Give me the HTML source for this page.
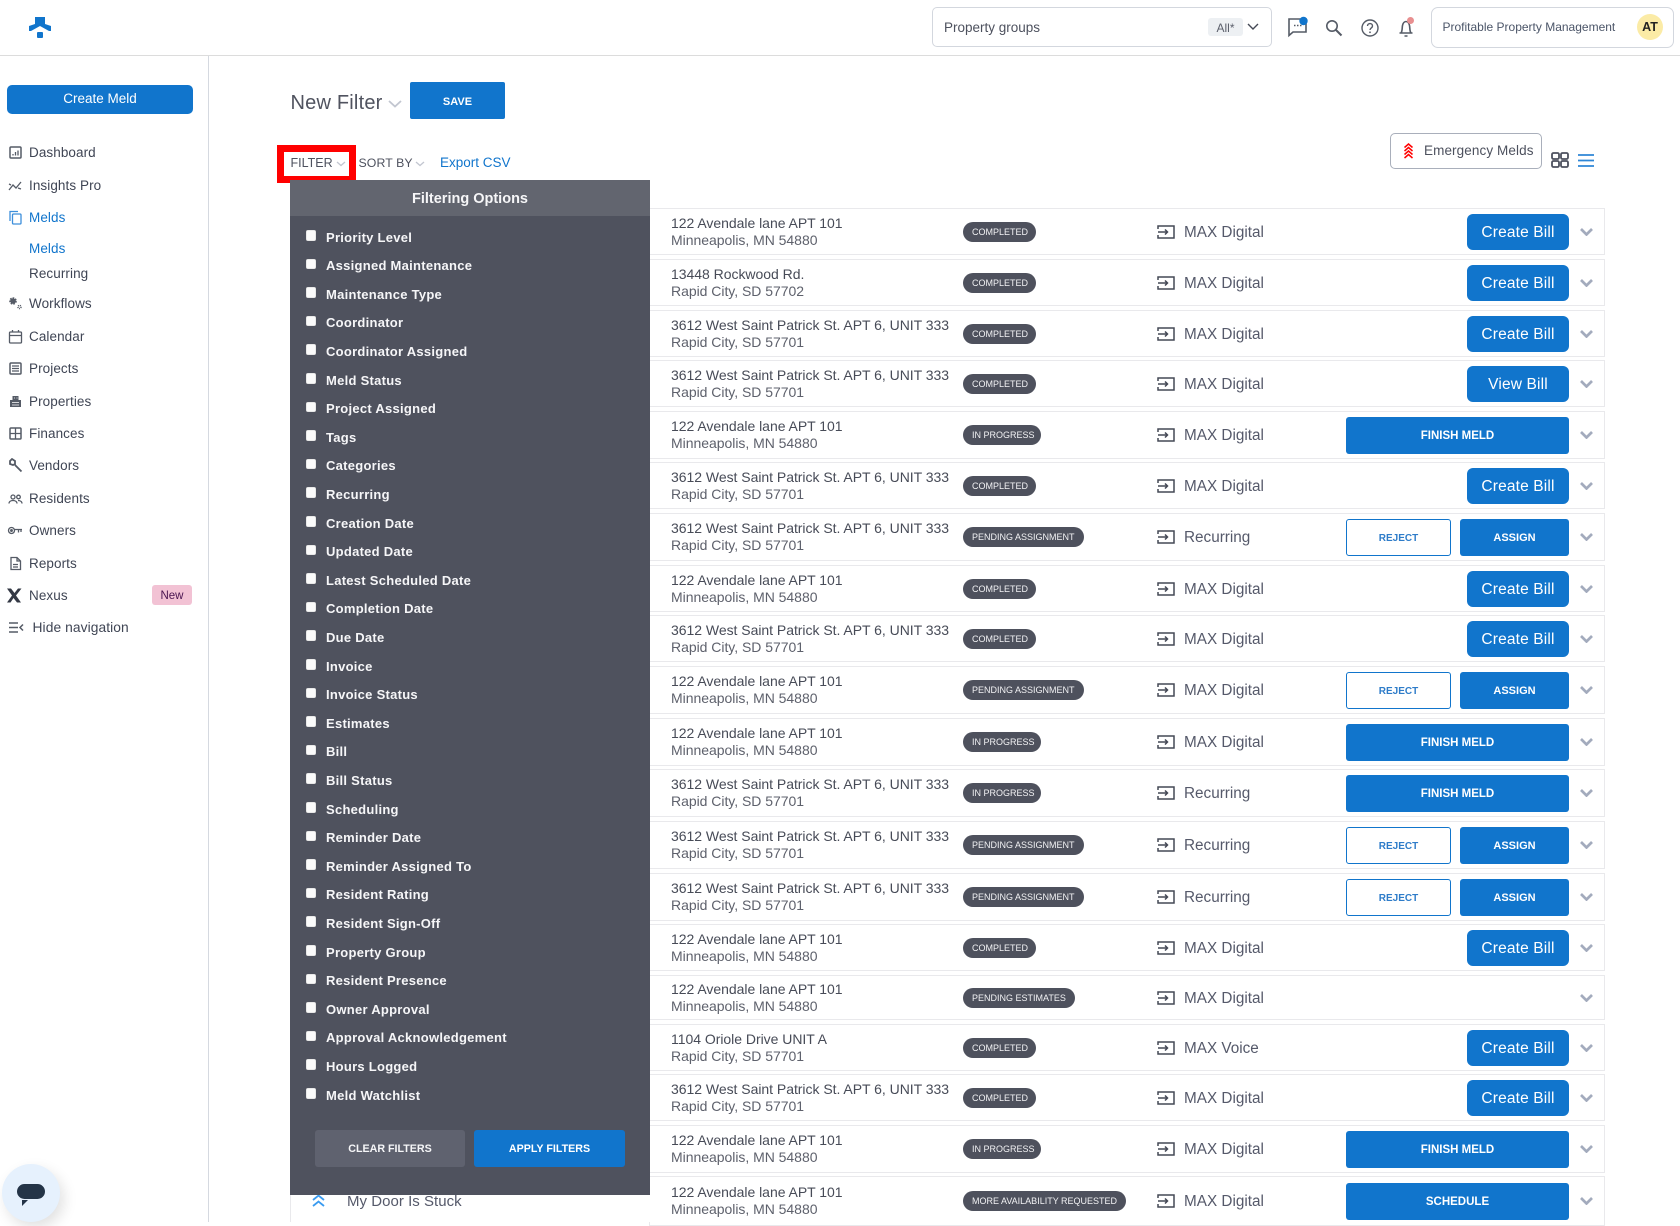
<!DOCTYPE html>
<html lang="en"><head><meta charset="utf-8"><title>Melds</title>
<style>
*{box-sizing:border-box}
html,body{margin:0;padding:0}
body{width:1680px;height:1222px;overflow:hidden;position:relative;background:#fff;font-family:"Liberation Sans",sans-serif;color:#4d515e}
.abs,.n,.ni,.f,.k,.r,.r>*{position:absolute}
.n{left:29px;font-size:13.5px;letter-spacing:.08px;line-height:18px;height:18px;color:#3f4554;white-space:nowrap}
.n.b{color:#1175cc}
.ni{left:8px;width:15px;height:15px;fill:none;stroke:#555b66;stroke-width:1.3}
.f{left:326px;margin-top:.6px;font-size:13px;letter-spacing:.27px;font-weight:bold;line-height:16px;color:#f6f6f8;white-space:nowrap}
.k{left:305.5px;margin-top:-1px;width:10.5px;height:10.5px;background:#fbfbfb;border-radius:2px;box-shadow:inset 0 0 1px #888}
.r{left:649px;width:956px;border:1px solid #e9e9ec;background:#fff}
.r>*{top:50%}
.a{left:21px;margin:-17px 0 0;font-size:14px;letter-spacing:-.03px;line-height:17px;color:#474b57;white-space:nowrap}
.a span{color:#5e616c}
.bd{left:313px;margin-top:-10px;height:20px;line-height:20px;border-radius:10px;background:#4e515d;color:#f2f2f4;font-size:9px;padding-left:9px;white-space:nowrap}
.w1{width:73px}.w2{width:78px}.w3{width:121px}.w4{width:112px}.w5{width:163px}
.sr{left:507px;margin-top:-7px;width:18px;height:14px}
.s{left:534px;margin-top:-9px;font-size:15.3px;line-height:20px;color:#55596a;white-space:nowrap}
.cb,.fm,.rj,.as{text-align:center;color:#fff;background:#1175cc}
.cb{left:817px;width:102px;height:36px;margin-top:-18px;line-height:38px;border-radius:6px;font-size:15.5px;letter-spacing:.15px}
.fm{left:696px;width:223px;height:37px;margin-top:-18px;line-height:39px;border-radius:3px;font-size:11.5px;font-weight:bold}
.rj{left:696px;width:105px;height:37px;margin-top:-18px;line-height:37px;border-radius:3px;font-size:10px;font-weight:bold;background:#fff;border:1px solid #1175cc;color:#2e7cc9}
.as{left:810px;width:109px;height:37px;margin-top:-18px;line-height:39px;border-radius:3px;font-size:11px;font-weight:bold}
.c{left:930px;margin-top:-4px;width:13px;height:8px}
</style></head><body>
<svg width="0" height="0" style="position:absolute"><defs>
<symbol id="src" viewBox="0 0 18 14"><path d="M1 4V1h16v12H1v-3M1 7h9.5M8 4.5L10.5 7 8 9.5" fill="none" stroke="#444855" stroke-width="1.5"/></symbol>
<symbol id="chv" viewBox="0 0 13 8"><path d="M1 1l5.5 5.5L12 1" fill="none" stroke="#a3abbd" stroke-width="2.7"/></symbol>
</defs></svg>

<!-- header -->
<div class="abs" style="left:0;top:54.5px;width:1680px;height:1.5px;background:#dcdcdc"></div>
<svg class="abs" style="left:28px;top:16px" width="24" height="23" viewBox="0 0 24 23"><path d="M7 1h10v7l6 2v5h-2l-9-5-9 5H1v-5l6-2z" fill="#1175cc"/><rect x="9" y="16" width="6" height="6" rx="1" fill="#1175cc"/></svg>
<div class="abs" style="left:932px;top:7px;width:340px;height:40px;border:1px solid #d3d7de;border-radius:5px"></div>
<div class="abs" style="left:944px;top:18px;font-size:13.5px;line-height:19px;color:#4d515e">Property groups</div>
<div class="abs" style="left:1208px;top:18px;width:35px;height:18px;background:#edf0f3;border-radius:3px;font-size:12px;line-height:20px;text-align:center;color:#5c606c">All*</div>
<svg class="abs" style="left:1247px;top:23px" width="12" height="8" viewBox="0 0 12 8"><path d="M1 1l5 5 5-5" fill="none" stroke="#444955" stroke-width="1.4"/></svg>
<svg class="abs" style="left:1286px;top:15px" width="26" height="24" viewBox="0 0 26 24"><path d="M3 4h17v13H7l-4 3.500z" fill="none" stroke="#555b66" stroke-width="1.6"/><path d="M8 10.500h1.500M11 10.500h1.500M14 10.500h1.500" stroke="#555b66" stroke-width="1.400"/><circle cx="17.500" cy="6" r="4.200" fill="#1175cc"/></svg>
<svg class="abs" style="left:1325px;top:19px" width="18" height="18" viewBox="0 0 18 18"><circle cx="7" cy="7" r="5.200" fill="none" stroke="#555b66" stroke-width="1.600"/><path d="M11 11l5.500 5.500" stroke="#555b66" stroke-width="2"/></svg>
<svg class="abs" style="left:1360px;top:18px" width="20" height="20" viewBox="0 0 20 20"><circle cx="10" cy="10" r="8" fill="none" stroke="#555b66" stroke-width="1.400"/><path d="M7.500 8c0-3.200 5-3.200 5 0 0 2-2.500 1.800-2.500 4" fill="none" stroke="#555b66" stroke-width="1.400"/><circle cx="10" cy="14.300" r=".9" fill="#555b66"/></svg>
<svg class="abs" style="left:1397px;top:16px" width="20" height="22" viewBox="0 0 20 22"><path d="M2.500 17h13M4 17c1.500-2 1-5 1.500-7.500C6 7 7.500 5.500 9 5.500s3 1.500 3.500 4c.5 2.500 0 5.500 1.500 7.500M7.500 20h3" fill="none" stroke="#555b66" stroke-width="1.600"/><circle cx="13.500" cy="4.500" r="3.500" fill="#e88f90"/></svg>
<div class="abs" style="left:1431px;top:7px;width:243px;height:41px;border:1px solid #d3d7de;border-radius:7px"></div>
<div class="abs" style="left:1442.500px;top:19px;font-size:12px;line-height:16px;color:#4b5568;white-space:nowrap">Profitable Property Management</div>
<div class="abs" style="left:1637px;top:14px;width:26px;height:26px;border-radius:50%;background:#fbeba6;font-size:12.500px;font-weight:bold;line-height:26px;text-align:center;color:#222">AT</div>

<!-- sidebar -->
<div class="abs" style="left:208px;top:56px;width:1px;height:1166px;background:#d5d9e0"></div>
<div class="abs" style="left:7px;top:85px;width:186px;height:29px;background:#1175cc;border-radius:5px;color:#fff;font-size:13.500px;line-height:28px;text-align:center">Create Meld</div>

<svg class="ni" style="top:145px" viewBox="0 0 15 15"><rect x="2" y="2" width="11" height="11" rx="1" stroke-width="1.500"/><path d="M5 10.500V9M7.500 10.500V7M10 10.500V5.500"/></svg>
<div class="n" style="top:143.500px">Dashboard</div>
<svg class="ni" style="top:178px" viewBox="0 0 15 15"><path d="M1 12l4-5 3 3 5-6M1 6l2 1M10 10l3 1"/></svg>
<div class="n" style="top:176.500px">Insights Pro</div>
<svg class="ni" style="top:210px;stroke:#3d8fdb" viewBox="0 0 15 15"><path d="M2 11V1.500h8"/><rect x="4.500" y="4" width="8.500" height="10" rx="1"/></svg>
<div class="n b" style="top:208.500px">Melds</div>
<div class="n b" style="top:239.500px">Melds</div>
<div class="n" style="top:264.500px">Recurring</div>
<svg class="ni" style="top:296px" viewBox="0 0 15 15"><circle cx="5" cy="5" r="2.800" fill="#555b66" stroke-width="2" stroke-dasharray="1.500 1"/><circle cx="11.500" cy="11" r="1.500" stroke-width="1.500" stroke-dasharray="1 .8"/></svg>
<div class="n" style="top:295px">Workflows</div>
<svg class="ni" style="top:329px" viewBox="0 0 15 15"><rect x="1.500" y="3" width="12" height="11" rx="1"/><path d="M1.500 6.500h12M4.500 1v2.500M10.500 1v2.500"/></svg>
<div class="n" style="top:327.500px">Calendar</div>
<svg class="ni" style="top:361px" viewBox="0 0 15 15"><rect x="2" y="2" width="11" height="11" rx="1" stroke-width="1.500"/><path d="M4 5h7M4 7.500h7M4 10h7"/></svg>
<div class="n" style="top:360px">Projects</div>
<svg class="ni" style="top:394px" viewBox="0 0 15 15"><path d="M2 13V6h2.500V2h6v4H13v7z" fill="#555b66" stroke="none"/><path d="M6 4h1M8.500 4h1M4 8.500h7M4 11h7M1 13.500h13" stroke="#fff" stroke-width=".7"/></svg>
<div class="n" style="top:393px">Properties</div>
<svg class="ni" style="top:426px" viewBox="0 0 15 15"><rect x="2" y="2" width="11" height="11" rx="1" stroke-width="1.500"/><path d="M2 7.500h11M7.500 2v11"/></svg>
<div class="n" style="top:425px">Finances</div>
<svg class="ni" style="top:458px" viewBox="0 0 15 15"><path d="M7 7l6.500 6.500M2 3l2-2 3 2v3L5 7 2 6z" stroke-width="1.800"/></svg>
<div class="n" style="top:457px">Vendors</div>
<svg class="ni" style="top:491px" viewBox="0 0 15 15"><circle cx="5" cy="6" r="2"/><circle cx="10.500" cy="6" r="1.800"/><path d="M1 12.500c0-4 8-4 8 0M10 9.500c2 0 4 1 4 3"/></svg>
<div class="n" style="top:490px">Residents</div>
<svg class="ni" style="top:523px;left:7px;width:16px" viewBox="0 0 15 15"><circle cx="4" cy="7.500" r="3"/><circle cx="4" cy="7.500" r=".8" fill="#555b66"/><path d="M7 6.500h7.500M11 6.500v3M13.500 6.500v2.500"/></svg>
<div class="n" style="top:522px">Owners</div>
<svg class="ni" style="top:556px" viewBox="0 0 15 15"><path d="M3 1.500h6l3.500 3.500v8.500H3zM9 1.500V5h3.500M5 8.500h5M5 11h5"/></svg>
<div class="n" style="top:555px">Reports</div>
<svg class="ni" style="top:588px;left:7px;width:15px;height:15px" viewBox="0 0 15 15"><path d="M0 .5h4l3.500 4.500L11 .5h3.500L9 7.500l5 7h-4L6.500 10 3.500 14.500H0L5 7.500z" fill="#333844" stroke="none"/></svg>
<div class="n" style="top:587px">Nexus</div>
<div class="abs" style="left:152px;top:585px;width:40px;height:20px;border-radius:3px;background:#f2c2d4;color:#4a1450;font-size:11.500px;line-height:22px;text-align:center">New</div>
<svg class="ni" style="top:620px;left:8px;width:16px" viewBox="0 0 16 15"><path d="M1 3h9M1 7.500h9M1 12h9M15 4.500L12 7.500l3 3" stroke-width="1.500"/></svg>
<div class="n" style="top:619px;left:32.500px;font-size:13.800px">Hide navigation</div>

<div class="abs" style="left:2px;top:1164px;width:58px;height:58px;border-radius:50%;background:#e6f1fd;box-shadow:4px 6px 14px rgba(0,0,0,.12)"></div>
<div class="abs" style="left:16.500px;top:1184px;width:28px;height:15px;border-radius:8px;background:#243447"></div>
<svg class="abs" style="left:21px;top:1200px" width="8" height="7" viewBox="0 0 8 7"><path d="M1 0h6L1 6z" fill="#243447"/></svg>

<!-- main -->
<div class="abs" style="left:290.500px;top:91px;font-size:20px;line-height:24px;letter-spacing:.2px;color:#50535f;white-space:nowrap">New Filter</div>
<svg class="abs" style="left:388px;top:100px" width="14" height="8" viewBox="0 0 14 8"><path d="M1 1l6 5.500L13 1" fill="none" stroke="#c2c6d0" stroke-width="1.800"/></svg>
<div class="abs" style="left:410px;top:82px;width:95px;height:37px;background:#1175cc;border-radius:2px;color:#fff;font-size:11px;font-weight:bold;line-height:40px;text-align:center">SAVE</div>

<div class="abs" style="left:277px;top:145px;width:79px;height:38px;border:7px solid #f00"></div>
<div class="abs" style="left:290.500px;top:154.500px;font-size:12.500px;line-height:17px;color:#4d515e">FILTER</div>
<svg class="abs" style="left:336px;top:161px" width="10" height="6" viewBox="0 0 10 6"><path d="M1 1l4 3.500L9 1" fill="none" stroke="#c2c6d0" stroke-width="1.300"/></svg>
<div class="abs" style="left:358.500px;top:154.500px;font-size:12.300px;letter-spacing:.1px;line-height:17px;color:#4d515e;white-space:nowrap">SORT BY</div>
<svg class="abs" style="left:415px;top:161px" width="10" height="6" viewBox="0 0 10 6"><path d="M1 1l4 3.500L9 1" fill="none" stroke="#c2c6d0" stroke-width="1.300"/></svg>
<div class="abs" style="left:440px;top:153.500px;font-size:13.500px;line-height:18px;color:#1175cc;white-space:nowrap">Export CSV</div>

<div class="abs" style="left:1390px;top:133px;width:152px;height:36px;border:1px solid #a9afbb;border-radius:5px"></div>
<svg class="abs" style="left:1403px;top:143px" width="11" height="16" viewBox="0 0 11 16"><path d="M1.500 4.500L5.500 1l4 3.500M1.500 8L5.500 4.500 9.500 8M1.500 11.500L5.500 8l4 3.500M1.500 15l4-3.500 4 3.500" fill="none" stroke="#f00" stroke-width="1.500"/></svg>
<div class="abs" style="left:1424px;top:142px;font-size:13.500px;letter-spacing:.1px;line-height:18px;color:#4d515e;white-space:nowrap">Emergency Melds</div>
<svg class="abs" style="left:1551px;top:152px" width="18" height="16" viewBox="0 0 18 16"><rect x="1" y="1" width="7" height="6" rx="1.500" fill="none" stroke="#4d515e" stroke-width="1.800"/><rect x="10" y="1" width="7" height="6" rx="1.500" fill="none" stroke="#4d515e" stroke-width="1.800"/><rect x="1" y="9" width="7" height="6" rx="1.500" fill="none" stroke="#4d515e" stroke-width="1.800"/><rect x="10" y="9" width="7" height="6" rx="1.500" fill="none" stroke="#4d515e" stroke-width="1.800"/></svg>
<svg class="abs" style="left:1578px;top:153px" width="16" height="15" viewBox="0 0 16 15"><path d="M0 2h16M0 7.500h16M0 13h16" stroke="#2e86d6" stroke-width="1.800"/></svg>

<!-- rows -->
<div class="r" style="top:208px;height:47px"><p class="a">122 Avendale lane APT 101<br><span>Minneapolis, MN 54880</span></p><div class="bd w1">COMPLETED</div><svg class="sr"><use href="#src"/></svg><div class="s">MAX Digital</div><div class="cb">Create Bill</div><svg class="c"><use href="#chv"/></svg></div>
<div class="r" style="top:259px;height:47px"><p class="a">13448 Rockwood Rd.<br><span>Rapid City, SD 57702</span></p><div class="bd w1">COMPLETED</div><svg class="sr"><use href="#src"/></svg><div class="s">MAX Digital</div><div class="cb">Create Bill</div><svg class="c"><use href="#chv"/></svg></div>
<div class="r" style="top:310px;height:47px"><p class="a">3612 West Saint Patrick St. APT 6, UNIT 333<br><span>Rapid City, SD 57701</span></p><div class="bd w1">COMPLETED</div><svg class="sr"><use href="#src"/></svg><div class="s">MAX Digital</div><div class="cb">Create Bill</div><svg class="c"><use href="#chv"/></svg></div>
<div class="r" style="top:360px;height:47px"><p class="a">3612 West Saint Patrick St. APT 6, UNIT 333<br><span>Rapid City, SD 57701</span></p><div class="bd w1">COMPLETED</div><svg class="sr"><use href="#src"/></svg><div class="s">MAX Digital</div><div class="cb">View Bill</div><svg class="c"><use href="#chv"/></svg></div>
<div class="r" style="top:411px;height:48px"><p class="a">122 Avendale lane APT 101<br><span>Minneapolis, MN 54880</span></p><div class="bd w2">IN PROGRESS</div><svg class="sr"><use href="#src"/></svg><div class="s">MAX Digital</div><div class="fm">FINISH MELD</div><svg class="c"><use href="#chv"/></svg></div>
<div class="r" style="top:462px;height:47px"><p class="a">3612 West Saint Patrick St. APT 6, UNIT 333<br><span>Rapid City, SD 57701</span></p><div class="bd w1">COMPLETED</div><svg class="sr"><use href="#src"/></svg><div class="s">MAX Digital</div><div class="cb">Create Bill</div><svg class="c"><use href="#chv"/></svg></div>
<div class="r" style="top:513px;height:48px"><p class="a">3612 West Saint Patrick St. APT 6, UNIT 333<br><span>Rapid City, SD 57701</span></p><div class="bd w3">PENDING ASSIGNMENT</div><svg class="sr"><use href="#src"/></svg><div class="s">Recurring</div><div class="rj">REJECT</div><div class="as">ASSIGN</div><svg class="c"><use href="#chv"/></svg></div>
<div class="r" style="top:565px;height:47px"><p class="a">122 Avendale lane APT 101<br><span>Minneapolis, MN 54880</span></p><div class="bd w1">COMPLETED</div><svg class="sr"><use href="#src"/></svg><div class="s">MAX Digital</div><div class="cb">Create Bill</div><svg class="c"><use href="#chv"/></svg></div>
<div class="r" style="top:615px;height:47px"><p class="a">3612 West Saint Patrick St. APT 6, UNIT 333<br><span>Rapid City, SD 57701</span></p><div class="bd w1">COMPLETED</div><svg class="sr"><use href="#src"/></svg><div class="s">MAX Digital</div><div class="cb">Create Bill</div><svg class="c"><use href="#chv"/></svg></div>
<div class="r" style="top:666px;height:48px"><p class="a">122 Avendale lane APT 101<br><span>Minneapolis, MN 54880</span></p><div class="bd w3">PENDING ASSIGNMENT</div><svg class="sr"><use href="#src"/></svg><div class="s">MAX Digital</div><div class="rj">REJECT</div><div class="as">ASSIGN</div><svg class="c"><use href="#chv"/></svg></div>
<div class="r" style="top:718px;height:48px"><p class="a">122 Avendale lane APT 101<br><span>Minneapolis, MN 54880</span></p><div class="bd w2">IN PROGRESS</div><svg class="sr"><use href="#src"/></svg><div class="s">MAX Digital</div><div class="fm">FINISH MELD</div><svg class="c"><use href="#chv"/></svg></div>
<div class="r" style="top:769px;height:48px"><p class="a">3612 West Saint Patrick St. APT 6, UNIT 333<br><span>Rapid City, SD 57701</span></p><div class="bd w2">IN PROGRESS</div><svg class="sr"><use href="#src"/></svg><div class="s">Recurring</div><div class="fm">FINISH MELD</div><svg class="c"><use href="#chv"/></svg></div>
<div class="r" style="top:821px;height:48px"><p class="a">3612 West Saint Patrick St. APT 6, UNIT 333<br><span>Rapid City, SD 57701</span></p><div class="bd w3">PENDING ASSIGNMENT</div><svg class="sr"><use href="#src"/></svg><div class="s">Recurring</div><div class="rj">REJECT</div><div class="as">ASSIGN</div><svg class="c"><use href="#chv"/></svg></div>
<div class="r" style="top:873px;height:48px"><p class="a">3612 West Saint Patrick St. APT 6, UNIT 333<br><span>Rapid City, SD 57701</span></p><div class="bd w3">PENDING ASSIGNMENT</div><svg class="sr"><use href="#src"/></svg><div class="s">Recurring</div><div class="rj">REJECT</div><div class="as">ASSIGN</div><svg class="c"><use href="#chv"/></svg></div>
<div class="r" style="top:924px;height:47px"><p class="a">122 Avendale lane APT 101<br><span>Minneapolis, MN 54880</span></p><div class="bd w1">COMPLETED</div><svg class="sr"><use href="#src"/></svg><div class="s">MAX Digital</div><div class="cb">Create Bill</div><svg class="c"><use href="#chv"/></svg></div>
<div class="r" style="top:975px;height:45px"><p class="a">122 Avendale lane APT 101<br><span>Minneapolis, MN 54880</span></p><div class="bd w4">PENDING ESTIMATES</div><svg class="sr"><use href="#src"/></svg><div class="s">MAX Digital</div><svg class="c"><use href="#chv"/></svg></div>
<div class="r" style="top:1024px;height:47px"><p class="a">1104 Oriole Drive UNIT A<br><span>Rapid City, SD 57701</span></p><div class="bd w1">COMPLETED</div><svg class="sr"><use href="#src"/></svg><div class="s">MAX Voice</div><div class="cb">Create Bill</div><svg class="c"><use href="#chv"/></svg></div>
<div class="r" style="top:1074px;height:47px"><p class="a">3612 West Saint Patrick St. APT 6, UNIT 333<br><span>Rapid City, SD 57701</span></p><div class="bd w1">COMPLETED</div><svg class="sr"><use href="#src"/></svg><div class="s">MAX Digital</div><div class="cb">Create Bill</div><svg class="c"><use href="#chv"/></svg></div>
<div class="r" style="top:1125px;height:48px"><p class="a">122 Avendale lane APT 101<br><span>Minneapolis, MN 54880</span></p><div class="bd w2">IN PROGRESS</div><svg class="sr"><use href="#src"/></svg><div class="s">MAX Digital</div><div class="fm">FINISH MELD</div><svg class="c"><use href="#chv"/></svg></div>
<div class="r" style="top:1176px;height:50px"><p class="a">122 Avendale lane APT 101<br><span>Minneapolis, MN 54880</span></p><div class="bd w5">MORE AVAILABILITY REQUESTED</div><svg class="sr"><use href="#src"/></svg><div class="s">MAX Digital</div><div class="fm">SCHEDULE</div><svg class="c"><use href="#chv"/></svg></div>

<!-- row behind panel -->
<div class="abs" style="left:645px;top:1190px;width:6px;height:32px;background:#fff"></div>
<div class="abs" style="left:290px;top:1190px;width:1px;height:32px;background:#e9e9ec"></div>
<svg class="abs" style="left:312px;top:1194px" width="13" height="13" viewBox="0 0 13 13"><path d="M1 6l5.500-4.500L12 6M1 12l5.500-4.500L12 12" fill="none" stroke="#3a9bf0" stroke-width="1.800"/></svg>
<div class="abs" style="left:347px;top:1191.500px;font-size:15px;letter-spacing:.03px;line-height:19px;color:#55596a;white-space:nowrap">My Door Is Stuck</div>

<!-- filter panel -->
<div class="abs" style="left:290px;top:180px;width:360px;height:1015px;background:#4f525e"></div>
<div class="abs" style="left:290px;top:180px;width:360px;height:36px;background:#62656f;color:#f6f6f8;font-size:14.500px;font-weight:bold;line-height:38px;text-align:center">Filtering Options</div>

<div class="k" style="top:231px"></div><div class="f" style="top:229px">Priority Level</div>
<div class="k" style="top:259.500px"></div><div class="f" style="top:257px">Assigned Maintenance</div>
<div class="k" style="top:288px"></div><div class="f" style="top:286px">Maintenance Type</div>
<div class="k" style="top:316.500px"></div><div class="f" style="top:314px">Coordinator</div>
<div class="k" style="top:345px"></div><div class="f" style="top:343px">Coordinator Assigned</div>
<div class="k" style="top:374px"></div><div class="f" style="top:372px">Meld Status</div>
<div class="k" style="top:402.500px"></div><div class="f" style="top:400px">Project Assigned</div>
<div class="k" style="top:431px"></div><div class="f" style="top:429px">Tags</div>
<div class="k" style="top:459.500px"></div><div class="f" style="top:457px">Categories</div>
<div class="k" style="top:488px"></div><div class="f" style="top:486px">Recurring</div>
<div class="k" style="top:517px"></div><div class="f" style="top:515px">Creation Date</div>
<div class="k" style="top:545.500px"></div><div class="f" style="top:543px">Updated Date</div>
<div class="k" style="top:574px"></div><div class="f" style="top:572px">Latest Scheduled Date</div>
<div class="k" style="top:602.500px"></div><div class="f" style="top:600px">Completion Date</div>
<div class="k" style="top:631px"></div><div class="f" style="top:629px">Due Date</div>
<div class="k" style="top:660px"></div><div class="f" style="top:658px">Invoice</div>
<div class="k" style="top:688.500px"></div><div class="f" style="top:686px">Invoice Status</div>
<div class="k" style="top:717px"></div><div class="f" style="top:715px">Estimates</div>
<div class="k" style="top:745.500px"></div><div class="f" style="top:743px">Bill</div>
<div class="k" style="top:774px"></div><div class="f" style="top:772px">Bill Status</div>
<div class="k" style="top:803px"></div><div class="f" style="top:801px">Scheduling</div>
<div class="k" style="top:831.500px"></div><div class="f" style="top:829px">Reminder Date</div>
<div class="k" style="top:860px"></div><div class="f" style="top:858px">Reminder Assigned To</div>
<div class="k" style="top:888.500px"></div><div class="f" style="top:886px">Resident Rating</div>
<div class="k" style="top:917px"></div><div class="f" style="top:915px">Resident Sign-Off</div>
<div class="k" style="top:946px"></div><div class="f" style="top:944px">Property Group</div>
<div class="k" style="top:974.500px"></div><div class="f" style="top:972px">Resident Presence</div>
<div class="k" style="top:1003px"></div><div class="f" style="top:1001px">Owner Approval</div>
<div class="k" style="top:1031.500px"></div><div class="f" style="top:1029px">Approval Acknowledgement</div>
<div class="k" style="top:1060px"></div><div class="f" style="top:1058px">Hours Logged</div>
<div class="k" style="top:1089px"></div><div class="f" style="top:1087px">Meld Watchlist</div>

<div class="abs" style="left:315px;top:1130px;width:150px;height:37px;border-radius:3px;background:#5f626f;color:#f6f6f8;font-size:10.700px;font-weight:bold;line-height:39px;text-align:center">CLEAR FILTERS</div>
<div class="abs" style="left:474px;top:1130px;width:151px;height:37px;border-radius:3px;background:#1175cc;color:#fff;font-size:10.700px;font-weight:bold;line-height:39px;text-align:center">APPLY FILTERS</div>
</body></html>
